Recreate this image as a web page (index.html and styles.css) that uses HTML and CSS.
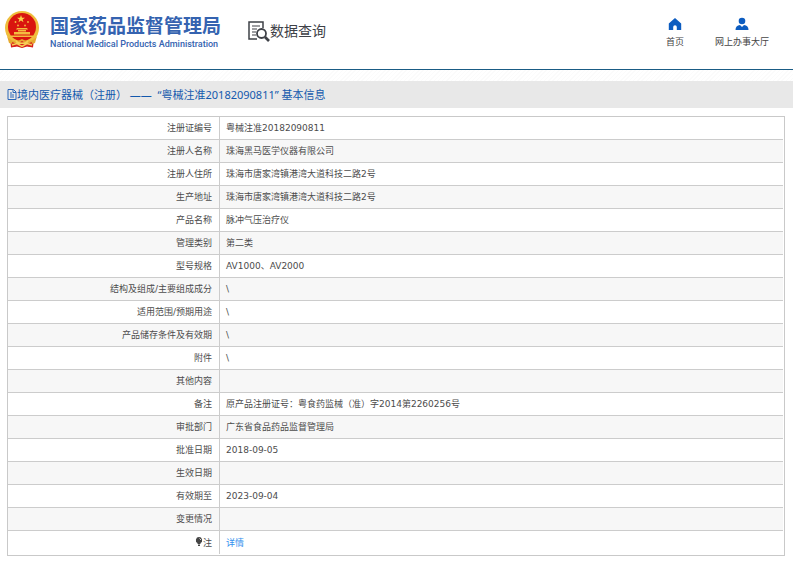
FILE: index.html
```html
<!DOCTYPE html>
<html lang="zh-CN">
<head>
<meta charset="utf-8">
<meta name="viewport" content="width=device-width, initial-scale=1">
<title>国家药品监督管理局 数据查询</title>
<link rel="stylesheet" href="styles.css">
</head>
<body>
<header class="header">
  <svg class="emblem" viewBox="0 0 36 40" aria-hidden="true">
    <path d="M6 29H30L29 37.500 23 36.500 18 38 13 36.500 7 37.500Z" fill="#d8221c"/>
    <circle cx="18" cy="18" r="17" fill="#efbd3c"/>
    <circle cx="18" cy="17" r="14" fill="#d9150f"/>
    <path d="M17 5l1 2.700h3l-2.400 1.700.9 2.800-2.500-1.700-2.500 1.700.9-2.800-2.400-1.700h3z" fill="#fbd24b"/>
    <g fill="#f4bd3f"><circle cx="11.500" cy="12" r=".9"/><circle cx="24" cy="12" r=".9"/><circle cx="14" cy="15.500" r=".9"/><circle cx="21" cy="15.500" r=".9"/>
    <path d="M13 18h10l1 1.500H12zM14 20h8v1.500h-8zM10 22h16v2.500H10zM7 25.500h22V27H7z"/></g>
    <path d="M3 26c4 5 8 6 11 5l4-2 4 2c3 1 7 0 11-5l-2 7-7 2-6-3-6 3-7-2z" fill="#e6aa30"/>
    <path d="M8 32l5 2 5-3 5 3 5-2-1 5-4-1-5 1.500-5-1.500-4 1z" fill="#d8221c"/>
    <path d="M12 31c2 3 10 3 12 0M8 35l5-1.500 5 3 5-3 5 1.500" fill="none" stroke="#f6cf55" stroke-width="1.500"/>
  </svg>
  <div class="brand">
    <span class="brand-cn">国家药品监督管理局</span>
    <span class="brand-en">National Medical Products Administration</span>
  </div>
  <div class="query">
    <svg class="query-icon" viewBox="0 0 22 22" fill="none" stroke="#3e4147" aria-hidden="true">
      <path d="M15 8V2H1v17h8" stroke-width="1.500"/>
      <path d="M4 6h8M4 9h5M4 12h4M4 15h4" stroke-width="1.200"/>
      <circle cx="13.500" cy="13.500" r="4.500" stroke-width="1.800"/>
      <path d="M17 17l4 4" stroke-width="2.600"/>
    </svg>
    <span>数据查询</span>
  </div>
  <nav class="nav">
    <a href="#home"><svg class="nav-icon" viewBox="0 0 14 14" aria-hidden="true"><path d="M7 1L.8 6.500V13H5.200V10a1.800 1.800 0 0 1 3.600 0V13h4.400V6.500z" fill="#0c5cc0"/></svg>首页</a>
    <a href="#hall"><svg class="nav-icon" viewBox="0 0 14 14" aria-hidden="true"><circle cx="7" cy="4" r="3.300" fill="#0c5cc0"/><path d="M.5 13c0-3 1.500-4.500 4.500-5l2 2 2-2c3 .5 4.500 2 4.500 5z" fill="#0c5cc0"/></svg>网上办事大厅</a>
  </nav>
</header>
<div class="hatch"></div>
<main>
  <h1 class="title">
    <svg class="doc-icon" viewBox="0 0 10 11" fill="none" stroke="#2b66b8" aria-hidden="true"><path d="M1 .5h5.500L9 3v7.500H1zM6 .5V3.500h3M3 4h2M3 6h4M3 8h4"/></svg>
    <span>境内医疗器械（注册） ——&nbsp; “粤械注准20182090811”&nbsp;基本信息</span>
  </h1>
  <div class="frame">
    <table class="info">
      <tbody>
        <tr><th scope="row">注册证编号</th><td>粤械注准20182090811</td></tr>
        <tr><th scope="row">注册人名称</th><td>珠海黑马医学仪器有限公司</td></tr>
        <tr><th scope="row">注册人住所</th><td>珠海市唐家湾镇港湾大道科技二路2号</td></tr>
        <tr><th scope="row">生产地址</th><td>珠海市唐家湾镇港湾大道科技二路2号</td></tr>
        <tr><th scope="row">产品名称</th><td>脉冲气压治疗仪</td></tr>
        <tr><th scope="row">管理类别</th><td>第二类</td></tr>
        <tr><th scope="row">型号规格</th><td>AV1000、AV2000</td></tr>
        <tr><th scope="row">结构及组成/主要组成成分</th><td>\</td></tr>
        <tr><th scope="row">适用范围/预期用途</th><td>\</td></tr>
        <tr><th scope="row">产品储存条件及有效期</th><td>\</td></tr>
        <tr><th scope="row">附件</th><td>\</td></tr>
        <tr><th scope="row">其他内容</th><td></td></tr>
        <tr><th scope="row">备注</th><td>原产品注册证号：粤食药监械（准）字2014第2260256号</td></tr>
        <tr><th scope="row">审批部门</th><td>广东省食品药品监督管理局</td></tr>
        <tr><th scope="row">批准日期</th><td>2018-09-05</td></tr>
        <tr><th scope="row">生效日期</th><td></td></tr>
        <tr><th scope="row">有效期至</th><td>2023-09-04</td></tr>
        <tr><th scope="row">变更情况</th><td></td></tr>
        <tr><th scope="row"><svg class="bulb" viewBox="0 0 8 9" aria-hidden="true"><path d="M4 0a3.200 3.200 0 0 0-1.500 6V7h3V6A3.200 3.200 0 0 0 4 0zM3 7.500h2V9H3z" fill="#444"/><path d="M4.500 1.500L6 3" stroke="#ddd"/></svg>注</th><td><a href="#detail">详情</a></td></tr>
      </tbody>
    </table>
  </div>
</main>
</body>
</html>
```

FILE: styles.css
```css
* {
  box-sizing: border-box;
}

body {
  margin: 0;
  background: #fff;
  color: #4c4c4c;
  font-family: "Noto Sans", "Noto Sans CJK SC", sans-serif;
  font-size: 9px;
  line-height: 14px;
}

.header {
  display: flex;
  align-items: flex-start;
  height: 70px;
  padding: 10px 24px 0 4px;
  border-bottom: 1px solid #1a5c85;
}

.emblem {
  width: 36px;
  height: 40px;
}

.brand {
  display: flex;
  flex-direction: column;
  margin-left: 10px;
  padding-top: 4px;
  color: #3563b0;
  white-space: nowrap;
}

.brand-cn {
  font-size: 19px;
  font-weight: 700;
  line-height: 24px;
}

.brand-en {
  font-family: Roboto, sans-serif;
  font-size: 9px;
  font-weight: 500;
  line-height: 12px;
}

.query {
  display: flex;
  align-items: center;
  margin-left: 27px;
  padding-top: 10px;
  color: #3e4147;
  font-size: 14px;
  line-height: 22px;
  white-space: nowrap;
}

.query-icon {
  width: 22px;
  height: 22px;
}

.nav {
  display: flex;
  gap: 31px;
  margin-left: auto;
  padding-top: 7px;
}

.nav a {
  display: flex;
  flex-direction: column;
  align-items: center;
  gap: 4px;
  color: #444;
  text-decoration: none;
}

.nav-icon {
  width: 14px;
  height: 14px;
}

.hatch {
  height: 11px;
  background: repeating-linear-gradient(135deg, #fff 0 2px, #fbfbfb 2px 3px);
}

.title {
  display: flex;
  align-items: center;
  height: 27px;
  margin: 0;
  padding-left: 7px;
  background: #e8e8e8;
  color: #1359ad;
  font-size: 11px;
  font-weight: 400;
}

.doc-icon {
  width: 10px;
  height: 11px;
}

.frame {
  margin: 8px 8px 0 7px;
  padding: 0 1px 1px 0;
  border: 1px solid #c9c9c9;
}

.info {
  width: 100%;
  border-spacing: 0;
  font-family: "DejaVu Sans", "Noto Sans CJK SC", sans-serif;
}

.info th,
.info td {
  height: 23px;
  padding: 0 6px;
  border-bottom: 1px solid #ccc;
  font-weight: 400;
  text-align: left;
}

.info th {
  width: 212px;
  padding-right: 7px;
  border-right: 1px solid #ccc;
  text-align: right;
}

.info tr:nth-child(even) {
  background: #f7f7f7;
}

.info tr:last-child th,
.info tr:last-child td {
  border-bottom: 0;
}

.info a {
  color: #3490ee;
  text-decoration: none;
}

.bulb {
  width: 8px;
  height: 9px;
}
```
